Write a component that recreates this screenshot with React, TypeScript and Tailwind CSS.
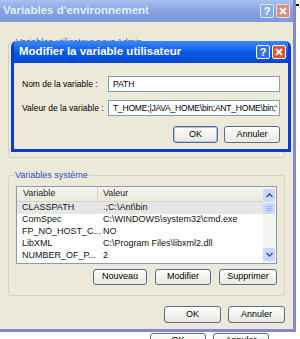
import React from "react";

const font = { fontFamily: '"Liberation Sans", Arial, sans-serif' };

const rows = [
  { name: "CLASSPATH", value: ".;C:\\Ant\\bin", selected: true },
  { name: "ComSpec", value: "C:\\WINDOWS\\system32\\cmd.exe" },
  { name: "FP_NO_HOST_C...", value: "NO" },
  { name: "LibXML", value: "C:\\Program Files\\libxml2.dll" },
  { name: "NUMBER_OF_P...", value: "2" },
];

const XpButton: React.FC<{ label: string; className?: string }> = ({ label, className = "" }) => (
  <div
    className={`flex items-center justify-center rounded-[3px] border border-[#5a6a8a] bg-linear-to-b from-[#fdfdfb] to-[#e9e8e2] text-[9px] text-black ${className}`}
  >
    {label}
  </div>
);

const TitleButtons: React.FC<{ active?: boolean }> = ({ active }) => (
  <div className="flex gap-[2px]">
    <div
      className={`flex h-[14px] w-[14px] items-center justify-center rounded-[2px] border text-[11px] font-bold leading-none text-white ${
        active ? "border-white bg-[#2f6ff0]" : "border-[#dce6fa] bg-[#8eaaec]"
      }`}
    >
      ?
    </div>
    <div
      className={`flex h-[14px] w-[14px] items-center justify-center rounded-[2px] border text-white ${
        active ? "border-white bg-[#e0542c]" : "border-[#f0dcd6] bg-[#d8907c]"
      }`}
    >
      <svg width="8" height="8" viewBox="0 0 8 8">
        <path d="M1 1 L7 7 M7 1 L1 7" stroke="white" strokeWidth="1.8" />
      </svg>
    </div>
  </div>
);

export default function App() {
  return (
    <div className="relative h-[339px] w-[300px] overflow-hidden bg-white" style={font}>
      {/* main window */}
      <div className="flex h-[332px] w-[296px] flex-col border-r-[3px] border-b-[3px] border-[#8487cc] bg-[#ece9d8]">
        <div className="flex h-[22px] shrink-0 items-center justify-between bg-linear-to-b from-[#a9c0f0] via-[#86a2e4] to-[#7d99e0] pl-[3px] pr-[3px]">
          <span className="text-[11.5px] font-bold text-[#e4ecfb]">Variables d'environnement</span>
          <TitleButtons />
        </div>

        <div className="flex flex-1 flex-col px-[8px]">
          {/* user variables group, mostly under the edit dialog */}
          <div className="relative mt-[20px] h-[116px] rounded-[3px] border border-[#d5d2c4]">
            <span className="absolute -top-[7px] left-[6px] bg-[#ece9d8] px-[1px] text-[9px] text-[#1f4fc8]">
              Variables utilisateur pour Admin
            </span>
          </div>

          {/* system variables group */}
          <div className="relative mt-[17px] flex h-[121px] flex-col rounded-[3px] border border-[#d5d2c4] px-[7px] pt-[10px]">
            <span className="absolute -top-[7px] left-[5px] bg-[#ece9d8] px-[1px] text-[9px] text-[#1f4fc8]">
              Variables système
            </span>
            <div className="flex h-[78px] border border-[#8c9ab4] bg-white">
              <div className="flex flex-1 flex-col">
                <div className="flex h-[15px] shrink-0 border-b border-[#d6d3c3] bg-linear-to-b from-[#f4f3ee] to-[#ebeadb] text-[9px] text-[#222]">
                  <div className="flex w-[81px] items-center border-r border-[#d6d3c3] pl-[6px]">Variable</div>
                  <div className="flex items-center pl-[5px]">Valeur</div>
                </div>
                {rows.map((r) => (
                  <div
                    key={r.name}
                    className={`flex h-[12px] items-center text-[9px] text-[#111] ${r.selected ? "bg-[#e6e6e6]" : ""}`}
                  >
                    <div className="w-[81px] pl-[5px] whitespace-nowrap">{r.name}</div>
                    <div className="pl-[5px] whitespace-nowrap">{r.value}</div>
                  </div>
                ))}
              </div>
              {/* scrollbar */}
              <div className="flex w-[13px] flex-col bg-[#f4f4f0] py-[2px] pr-[1px]">
                <div className="flex h-[13px] items-center justify-center rounded-[2px] bg-[#c8d7fa]">
                  <svg width="7" height="5" viewBox="0 0 7 5">
                    <path d="M0.5 4 L3.5 1 L6.5 4" stroke="#3a4f86" strokeWidth="1.4" fill="none" />
                  </svg>
                </div>
                <div className="mt-[1px] flex h-[11px] flex-col items-center justify-center gap-[1px] rounded-[2px] bg-[#c9d8fb]">
                  <div className="h-px w-[6px] bg-[#9fb4e6]" />
                  <div className="h-px w-[6px] bg-[#9fb4e6]" />
                  <div className="h-px w-[6px] bg-[#9fb4e6]" />
                </div>
                <div className="flex-1" />
                <div className="flex h-[13px] items-center justify-center rounded-[2px] bg-[#c8d7fa]">
                  <svg width="7" height="5" viewBox="0 0 7 5">
                    <path d="M0.5 1 L3.5 4 L6.5 1" stroke="#3a4f86" strokeWidth="1.4" fill="none" />
                  </svg>
                </div>
              </div>
            </div>
            <div className="mt-[5px] flex justify-end gap-[8px]">
              <XpButton label="Nouveau" className="h-[16px] w-[54px]" />
              <XpButton label="Modifier" className="h-[16px] w-[56px]" />
              <XpButton label="Supprimer" className="h-[16px] w-[58px]" />
            </div>
          </div>

          <div className="mt-[10px] flex justify-end gap-[7px]">
            <XpButton label="OK" className="h-[17px] w-[57px]" />
            <XpButton label="Annuler" className="h-[17px] w-[57px]" />
          </div>
        </div>
      </div>

      {/* window behind, peeking below */}
      <div className="flex gap-[7px] pl-[150px] pt-[1px]">
        <XpButton label="OK" className="h-[14px] w-[56px] items-start" />
        <XpButton label="Annuler" className="h-[14px] w-[56px] items-start" />
      </div>
      <div className="absolute right-[1px] top-[4px] h-[2px] w-[3px] bg-black" />

      {/* edit dialog */}
      <div className="absolute left-[11px] top-[41px] flex h-[111px] w-[280px] flex-col overflow-hidden rounded-t-[6px] border-[3px] border-t-0 border-[#0a3bd6] bg-[#ece9d8]">
        <div className="-mx-[3px] flex h-[22px] shrink-0 items-center justify-between bg-linear-to-b from-[#3b87f5] via-[#0a5ae6] to-[#0048d4] pl-[8px] pr-[5px]">
          <span className="text-[11.5px] font-bold text-white">Modifier la variable utilisateur</span>
          <TitleButtons active />
        </div>
        <div className="flex flex-col gap-[8px] px-[8px] pt-[13px]">
          <div className="flex items-center">
            <span className="w-[86px] whitespace-nowrap text-[8.5px] text-black">Nom de la variable :</span>
            <div className="flex h-[16px] flex-1 items-center border border-[#7f9db9] bg-white pl-[4px] text-[8.5px] text-black">
              PATH
            </div>
          </div>
          <div className="flex items-center">
            <span className="w-[86px] whitespace-nowrap text-[8.5px] text-black">Valeur de la variable :</span>
            <div className="flex h-[16px] flex-1 items-center overflow-hidden whitespace-nowrap border border-[#7f9db9] bg-white pl-[4px] text-[8.5px] tracking-[-0.2px] text-black">
              T_HOME;|JAVA_HOME\bin;ANT_HOME\bin;&lsquo;
            </div>
          </div>
          <div className="flex justify-end gap-[6px] pt-[2px]">
            <XpButton label="OK" className="h-[17px] w-[45px] border-[#3a5a9a] shadow-[inset_0_0_0_1px_#a8c4f0]" />
            <XpButton label="Annuler" className="h-[17px] w-[56px]" />
          </div>
        </div>
      </div>
    </div>
  );
}
